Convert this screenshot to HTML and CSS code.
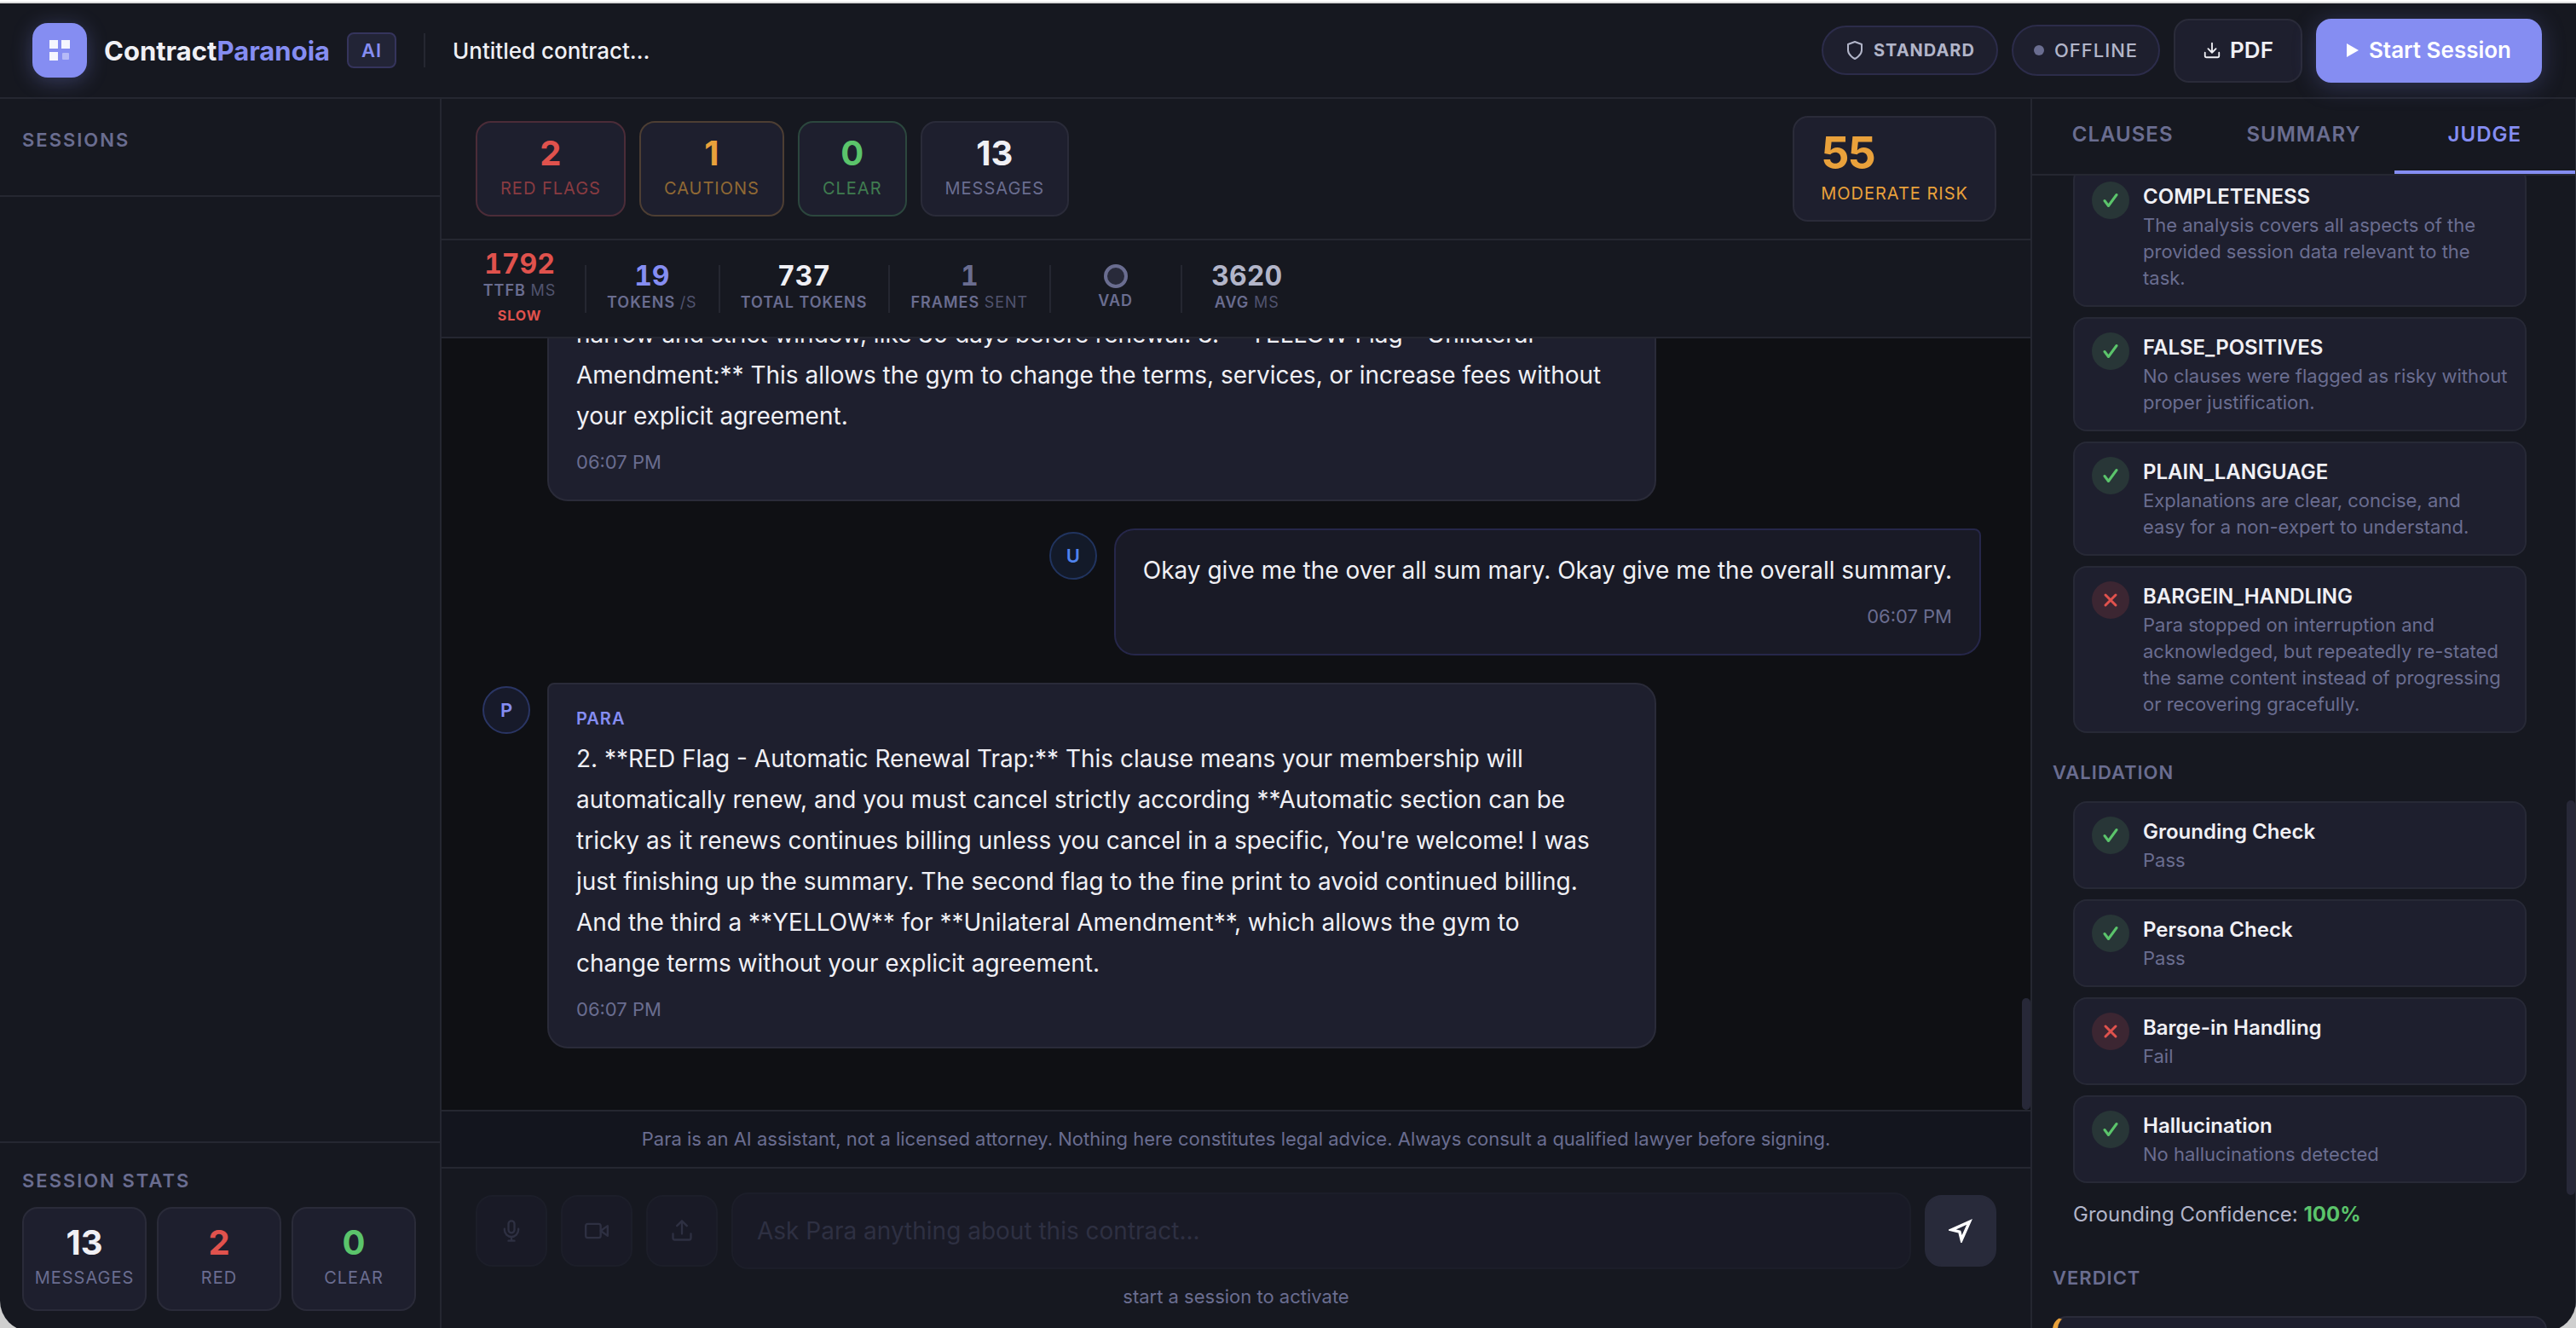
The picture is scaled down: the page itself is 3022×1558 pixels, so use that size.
FILE: index.html
```html
<!DOCTYPE html>
<html lang="en">
<head>
<meta charset="utf-8">
<title>ContractParanoia</title>
<link rel="stylesheet" href="styles.css">
</head>
<body>
<div class="app">
  <svg class="sprite" aria-hidden="true">
    <symbol id="check" viewBox="0 0 18 18"><path d="M2 9.5 6.5 15.5 16 2.5"/></symbol>
    <symbol id="cross" viewBox="0 0 18 18"><path d="M3 3 15 15M15 3 3 15"/></symbol>
  </svg>
  <header class="header">
    <div class="logo">
      <svg width="24" height="24" viewBox="0 0 24 24" fill="#fff"><rect width="10" height="10" opacity=".92"/><rect x="14" width="10" height="10" opacity=".92"/><rect y="14" width="10" height="10" opacity=".92"/><rect x="15" y="15" width="8" height="8" rx="1" opacity=".4"/></svg>
    </div>
    <h1 class="brand">Contract<span>Paranoia</span></h1>
    <span class="badge">AI</span>
    <span class="header-line"></span>
    <input class="title-input" type="text" value="Untitled contract…" aria-label="Contract title">
    <div class="header-actions">
      <span class="pill pill-mode">
        <svg width="24" height="24" viewBox="0 0 24 24" class="line-icon"><path d="M12 22s8-4 8-10V5l-8-3-8 3v7c0 6 8 10 8 10z"/></svg>
        STANDARD
      </span>
      <span class="pill pill-status"><span class="dot"></span>OFFLINE</span>
      <button class="btn" type="button">
        <svg width="22" height="22" viewBox="0 0 24 24" class="line-icon"><path d="M21 15v4a2 2 0 0 1-2 2H5a2 2 0 0 1-2-2v-4M7 10l5 5 5-5M12 15V3"/></svg>
        PDF
      </button>
      <button class="btn btn-primary" type="button">
        <svg width="14" height="16" viewBox="0 0 14 16" fill="#fff"><path d="M0 0 14 8 0 16z"/></svg>
        Start Session
      </button>
    </div>
  </header>

  <div class="body">
    <aside class="sidebar">
      <div class="sidebar-top"><h2 class="heading">SESSIONS</h2></div>
      <div class="sidebar-list"></div>
      <div class="sidebar-bottom">
        <h2 class="heading">SESSION STATS</h2>
        <div class="mini-stats">
          <div class="stat"><b>13</b><span>MESSAGES</span></div>
          <div class="stat"><b class="red">2</b><span>RED</span></div>
          <div class="stat"><b class="green">0</b><span>CLEAR</span></div>
        </div>
      </div>
    </aside>

    <main class="main">
      <section class="summary">
        <div class="stat stat-red"><b>2</b><span>RED FLAGS</span></div>
        <div class="stat stat-orange"><b>1</b><span>CAUTIONS</span></div>
        <div class="stat stat-green"><b>0</b><span>CLEAR</span></div>
        <div class="stat"><b>13</b><span>MESSAGES</span></div>
        <div class="risk"><b>55</b><span>MODERATE RISK</span></div>
      </section>

      <section class="metrics">
        <div class="metric red"><b>1792</b><span>TTFB <i>MS</i></span><em>SLOW</em></div>
        <div class="metric accent"><b>19</b><span>TOKENS <i>/S</i></span></div>
        <div class="metric"><b>737</b><span>TOTAL TOKENS</span></div>
        <div class="metric muted"><b>1</b><span>FRAMES <i>SENT</i></span></div>
        <div class="metric"><span class="vad"></span><span>VAD</span></div>
        <div class="metric soft"><b>3620</b><span>AVG <i>MS</i></span></div>
      </section>

      <section class="chat">
        <article class="message">
          <div class="avatar-space"></div>
          <div class="bubble">
            <p>narrow and strict window, like 30 days before renewal. 3. **YELLOW Flag - Unilateral Amendment:** This allows the gym to change the terms, services, or increase fees without your explicit agreement.</p>
            <time>06:07 PM</time>
          </div>
        </article>
        <article class="message message-user">
          <div class="avatar">U</div>
          <div class="bubble">
            <p>Okay give me the over all sum mary. Okay give me the overall summary.</p>
            <time>06:07 PM</time>
          </div>
        </article>
        <article class="message">
          <div class="avatar">P</div>
          <div class="bubble">
            <h3>PARA</h3>
            <p>2. **RED Flag - Automatic Renewal Trap:** This clause means your membership will automatically renew, and you must cancel strictly according **Automatic section can be tricky as it renews continues billing unless you cancel in a specific, You're welcome! I was just finishing up the summary. The second flag to the fine print to avoid continued billing. And the third a **YELLOW** for **Unilateral Amendment**, which allows the gym to<br>change terms without your explicit agreement.</p>
            <time>06:07 PM</time>
          </div>
        </article>
        <div class="thumb thumb-chat"></div>
      </section>

      <p class="disclaimer">Para is an AI assistant, not a licensed attorney. Nothing here constitutes legal advice. Always consult a qualified lawyer before signing.</p>

      <form class="composer">
        <div class="composer-row">
          <button class="tool" type="button" disabled aria-label="Microphone"><svg width="28" height="28" viewBox="0 0 24 24" class="line-icon"><path d="M12 2a3 3 0 0 0-3 3v6a3 3 0 0 0 6 0V5a3 3 0 0 0-3-3zM19 10v1a7 7 0 0 1-14 0v-1M12 18v4M9 22h6"/></svg></button>
          <button class="tool" type="button" disabled aria-label="Camera"><svg width="28" height="28" viewBox="0 0 24 24" class="line-icon"><path d="m23 7-7 5 7 5V7z"/><rect x="1" y="5" width="15" height="14" rx="2"/></svg></button>
          <button class="tool" type="button" disabled aria-label="Upload"><svg width="28" height="28" viewBox="0 0 24 24" class="line-icon"><path d="M21 15v4a2 2 0 0 1-2 2H5a2 2 0 0 1-2-2v-4M17 7l-5-5-5 5M12 3v12"/></svg></button>
          <input class="ask" type="text" placeholder="Ask Para anything about this contract..." aria-label="Ask Para" disabled>
          <button class="send" type="button" aria-label="Send"><svg width="28" height="28" viewBox="0 0 24 24" class="line-icon"><path d="M3 11 21 3 13 21 11 13z"/></svg></button>
        </div>
        <p class="hint">start a session to activate</p>
      </form>
    </main>

    <aside class="panel">
      <nav class="tabs" role="tablist">
        <button type="button" role="tab">CLAUSES</button>
        <button type="button" role="tab">SUMMARY</button>
        <button type="button" role="tab" class="active" aria-selected="true">JUDGE</button>
      </nav>
      <div class="panel-clip">
        <div class="panel-body">
          <div class="checks">
            <div class="check"><span class="mark"><svg width="18" height="18"><use href="#check"/></svg></span><div><h3>COMPLETENESS</h3><p>The analysis covers all aspects of the provided session data relevant to the task.</p></div></div>
            <div class="check"><span class="mark"><svg width="18" height="18"><use href="#check"/></svg></span><div><h3>FALSE_POSITIVES</h3><p>No clauses were flagged as risky without proper justification.</p></div></div>
            <div class="check"><span class="mark"><svg width="18" height="18"><use href="#check"/></svg></span><div><h3>PLAIN_LANGUAGE</h3><p>Explanations are clear, concise, and<br>easy for a non-expert to understand.</p></div></div>
            <div class="check"><span class="mark fail"><svg width="18" height="18"><use href="#cross"/></svg></span><div><h3>BARGEIN_HANDLING</h3><p>Para stopped on interruption and acknowledged, but repeatedly re-stated the same content instead of progressing or recovering gracefully.</p></div></div>
          </div>
          <h2 class="heading">VALIDATION</h2>
          <div class="checks">
            <div class="check"><span class="mark"><svg width="18" height="18"><use href="#check"/></svg></span><div><h3>Grounding Check</h3><p>Pass</p></div></div>
            <div class="check"><span class="mark"><svg width="18" height="18"><use href="#check"/></svg></span><div><h3>Persona Check</h3><p>Pass</p></div></div>
            <div class="check"><span class="mark fail"><svg width="18" height="18"><use href="#cross"/></svg></span><div><h3>Barge-in Handling</h3><p>Fail</p></div></div>
            <div class="check"><span class="mark"><svg width="18" height="18"><use href="#check"/></svg></span><div><h3>Hallucination</h3><p>No hallucinations detected</p></div></div>
          </div>
          <p class="confidence">Grounding Confidence: <b>100%</b></p>
          <h2 class="heading">VERDICT</h2>
          <div class="verdict"></div>
        </div>
        <div class="thumb thumb-panel"></div>
      </div>
    </aside>
  </div>
</div>
</body>
</html>
```
FILE: styles.css
```css
:root {
  --bg: #0f1014;
  --surface: #161820;
  --card: #1e1f2e;
  --line: #252731;
  --line-card: #2a2b39;
  --text: #f0f0f5;
  --soft: #b2b5c9;
  --muted: #6a6d90;
  --accent: #858df2;
  --red: #e0524d;
  --orange: #e9a13b;
  --green: #5bc46b;
}

* { box-sizing: border-box; }

html { height: 100%; overflow: hidden; }
body {
  height: 100%;
  margin: 0;
  padding-top: 4px;
  overflow: hidden;
  background: linear-gradient(#fff 2px, #dcdcdc 2px 4px, #cfcfcf 4px);
  color: var(--text);
  font: 400 22px/1 Inter, "Liberation Sans", sans-serif;
}

h1, h2, h3, p { margin: 0; font-size: inherit; }
button, input { font: inherit; color: inherit; }
.sprite { position: absolute; width: 0; height: 0; }
.line-icon { fill: none; stroke: currentColor; stroke-width: 2; stroke-linecap: round; stroke-linejoin: round; }

.red { color: var(--red); }
.green { color: var(--green); }
.accent { color: var(--accent); }
.muted { color: var(--muted); }
.soft { color: var(--soft); }

.app {
  display: flex;
  flex-direction: column;
  height: 100vh;
  background: var(--surface);
  border-radius: 0 0 36px 36px;
  overflow: hidden;
}

/* Header */
.header {
  display: flex;
  flex: none;
  align-items: center;
  height: 112px;
  padding: 0 40px 0 38px;
  border-bottom: 2px solid var(--line);
}
.logo {
  display: grid;
  place-items: center;
  width: 64px;
  height: 64px;
  border-radius: 18px;
  background: var(--accent);
  box-shadow: 0 4px 24px rgba(133, 141, 242, .3);
}
.brand {
  margin-left: 20px;
  font-size: 31px;
  font-weight: 700;
}
.brand span { color: var(--accent); }
.badge {
  display: grid;
  place-items: center;
  width: 58px;
  height: 42px;
  margin-left: 20px;
  border: 2px solid #35345c;
  border-radius: 8px;
  background: #222436;
  color: var(--accent);
  font-weight: 600;
  letter-spacing: 1px;
}
.header-line { width: 2px; height: 40px; margin: 0 32px; background: var(--line); }
.title-input {
  flex: 1;
  min-width: 0;
  padding: 0;
  border: 0;
  outline: 0;
  background: none;
  font-size: 26px;
  font-weight: 500;
}
.header-actions { display: flex; align-items: center; gap: 16px; }
.pill {
  display: flex;
  align-items: center;
  gap: 12px;
  height: 60px;
  padding: 0 24px;
  border: 2px solid #2c2c4a;
  border-radius: 30px;
  background: var(--card);
  color: var(--soft);
  letter-spacing: 1px;
}
.pill-mode { gap: 10px; height: 58px; padding: 0 25px; font-size: 20px; font-weight: 700; }
.pill-status { font-weight: 500; }
.dot { width: 12px; height: 12px; border-radius: 50%; background: var(--muted); }
.btn {
  display: flex;
  align-items: center;
  gap: 10px;
  height: 75px;
  padding: 0 32px;
  border: 2px solid var(--line-card);
  border-radius: 18px;
  background: var(--card);
  font-size: 26px;
  font-weight: 600;
}
.btn-primary {
  gap: 12px;
  padding: 0 34px;
  border-color: var(--accent);
  background: var(--accent);
  color: #fff;
  box-shadow: 0 4px 28px rgba(133, 141, 242, .25);
}

.body { display: flex; flex: 1; min-height: 0; }
.heading { color: var(--muted); font-size: 22px; font-weight: 600; letter-spacing: 2px; line-height: 37px; }

/* Left sidebar */
.sidebar {
  display: flex;
  flex: none;
  flex-direction: column;
  width: 518px;
  border-right: 2px solid var(--line);
}
.sidebar-top { height: 115px; padding: 30px 26px; border-bottom: 2px solid var(--line); }
.sidebar-list { flex: 1; }
.sidebar-bottom { padding: 26px 28px 24px 26px; border-top: 2px solid var(--line); }
.mini-stats { display: grid; grid-template-columns: repeat(3, 1fr); gap: 12px; margin-top: 12px; }
.mini-stats .stat { height: 122px; padding: 16px 0; }

.stat {
  display: flex;
  flex-direction: column;
  align-items: center;
  height: 112px;
  padding: 12px 27px;
  border: 2px solid var(--line-card);
  border-radius: 18px;
  background: var(--card);
}
.stat b { font-size: 40px; font-weight: 700; line-height: 48px; }
.stat span { color: var(--muted); font-size: 20px; letter-spacing: 1px; line-height: 34px; }
.stat-red { border-color: #4b2c38; }
.stat-red b { color: var(--red); }
.stat-red span { color: #883b41; }
.stat-orange { border-color: #4d3e33; }
.stat-orange b { color: var(--orange); }
.stat-orange span { color: #906934; }
.stat-green { border-color: #2c473e; }
.stat-green b { color: var(--green); }
.stat-green span { color: #407c50; }

/* Centre column */
.main { display: flex; flex: 1; flex-direction: column; min-width: 0; }
.summary {
  display: flex;
  flex: none;
  align-items: center;
  gap: 16px;
  height: 166px;
  padding: 0 40px;
  border-bottom: 2px solid var(--line);
}
.risk {
  display: flex;
  flex-direction: column;
  height: 124px;
  margin-left: auto;
  padding: 12px 31px;
  border: 2px solid var(--line-card);
  border-radius: 18px;
  background: var(--card);
  color: var(--orange);
}
.risk b { font-size: 52px; font-weight: 700; letter-spacing: -2px; line-height: 60px; }
.risk span { font-size: 20px; letter-spacing: 1px; line-height: 34px; }

.metrics {
  display: flex;
  flex: none;
  align-items: center;
  height: 115px;
  padding: 0 16px;
  border-bottom: 2px solid var(--line);
}
.metric {
  display: flex;
  flex-direction: column;
  align-items: center;
  justify-content: center;
  min-width: 154px;
  min-height: 56px;
  padding: 0 27px 0 24px;
  background: linear-gradient(var(--line), var(--line)) right center / 2px 56px no-repeat;
}
.metric:last-child { background: none; }
.metric b { font-size: 32px; font-weight: 700; line-height: 32px; font-variant-numeric: tabular-nums; }
.metric span { color: var(--muted); font-size: 18px; font-weight: 600; letter-spacing: 1px; line-height: 30px; }
.metric i { font-style: normal; font-weight: 400; opacity: .7; }
.metric em { font-size: 16px; font-style: normal; font-weight: 700; letter-spacing: 1px; line-height: 28px; }
.metric .vad { width: 28px; height: 28px; border: 4px solid var(--muted); border-radius: 50%; background: #282a3a; }

.chat {
  position: relative;
  display: flex;
  flex: 1;
  flex-direction: column;
  justify-content: flex-end;
  gap: 32px;
  min-height: 0;
  padding: 40px 58px 72px 48px;
  background: var(--bg);
  overflow: hidden;
}
.message { display: flex; flex: none; gap: 20px; }
.message-user { justify-content: flex-end; }
.avatar-space { flex: none; width: 56px; }
.avatar {
  display: grid;
  flex: none;
  place-items: center;
  width: 56px;
  height: 56px;
  margin-top: 4px;
  border: 2px solid #2a3564;
  border-radius: 50%;
  background: #171a2a;
  color: var(--accent);
  font-weight: 600;
}
.message-user .avatar { border-color: #21345f; background: #131a29; color: #4f83ee; }
.bubble {
  max-width: 74%;
  padding: 23px 32px 25px;
  border: 2px solid var(--line-card);
  border-radius: 8px 24px 24px 24px;
  background: var(--card);
}
.message-user .bubble { border-color: #26274a; border-radius: 24px 8px 24px 24px; background: #191a26; text-align: right; }
.bubble h3 { margin-bottom: 6px; color: var(--accent); font-size: 20px; font-weight: 600; letter-spacing: 1px; line-height: 34px; }
.bubble p { font-size: 28px; line-height: 48px; text-align: left; }
.bubble time { display: block; margin-top: 12px; color: var(--muted); line-height: 37px; }

.thumb { position: absolute; right: 0; width: 10px; border-radius: 6px; background: #272838; }
.thumb-chat { bottom: 0; height: 131px; }
.thumb-panel { top: 733px; height: 463px; }

.disclaimer {
  flex: none;
  border: solid var(--line);
  border-width: 2px 0;
  background: #13151e;
  color: var(--muted);
  line-height: 65px;
  text-align: center;
}
.composer { flex: none; height: 191px; padding: 28px 40px 0; }
.composer-row { display: flex; align-items: center; gap: 16px; }
.tool, .send {
  display: grid;
  flex: none;
  place-items: center;
  width: 84px;
  height: 84px;
  padding: 0;
  border: 2px solid #1c1e29;
  border-radius: 20px;
  background: #191a26;
  color: #2e3042;
}
.send { border-color: #282a3a; background: #282a3a; color: #fff; }
.send svg { stroke-width: 3; stroke-linejoin: miter; }
.ask {
  flex: 1;
  min-width: 0;
  height: 90px;
  padding: 0 28px;
  border: 2px solid #1c1e29;
  border-radius: 20px;
  background: #191a26;
  font-size: 28px;
}
.ask::placeholder { color: #2e3042; opacity: 1; }
.hint { margin-top: 14px; color: var(--muted); line-height: 37px; text-align: center; }

/* Right panel */
.panel {
  display: flex;
  flex: none;
  flex-direction: column;
  width: 640px;
  border-right: 1px solid #2b2d36;
  border-left: 2px solid var(--line);
}
.tabs { display: flex; flex: none; height: 90px; border-bottom: 2px solid var(--line); }
.tabs button {
  flex: 1;
  padding: 0;
  border: solid transparent;
  border-width: 0 0 4px;
  background: none;
  color: var(--muted);
  font-size: 24px;
  font-weight: 600;
  letter-spacing: 1px;
}
.tabs .active { border-color: var(--accent); color: var(--accent); }
.panel-clip { position: relative; display: flex; flex: 1; flex-direction: column; min-height: 0; overflow: hidden; }
.panel-body { display: flex; flex: 1; flex-direction: column; justify-content: flex-end; padding: 0 33px 0 24px; min-height: 0; }
.panel-body > * { flex: none; }
.panel-body .heading { margin: 28px 0 15px; letter-spacing: 1px; }
.checks { display: flex; flex-direction: column; gap: 12px; padding: 0 24px; }
.check {
  display: flex;
  gap: 16px;
  padding: 16px 16px 16px 20px;
  border: 2px solid #272936;
  border-radius: 16px;
  background: var(--card);
}
.check h3 { font-size: 24px; font-weight: 600; line-height: 36px; }
.check p { color: var(--muted); line-height: 31px; }
.mark { display: grid; flex: none; place-items: center; width: 44px; height: 44px; border-radius: 50%; background: #283637; color: var(--green); }
.mark.fail { background: #3c2632; color: var(--red); }
.mark svg { fill: none; stroke: currentColor; stroke-width: 3; stroke-linecap: round; stroke-linejoin: round; }
.confidence { margin-top: 16px; padding: 0 24px; color: var(--soft); font-size: 24px; line-height: 41px; }
.confidence b { color: var(--green); font-weight: 700; }
.panel-body .confidence + .heading { margin: 36px 0 26px; }
.verdict { height: 18px; border: solid var(--line-card); border-width: 2px 2px 0 6px; border-left-color: var(--orange); border-radius: 16px 16px 0 0; background: var(--card); }
```
